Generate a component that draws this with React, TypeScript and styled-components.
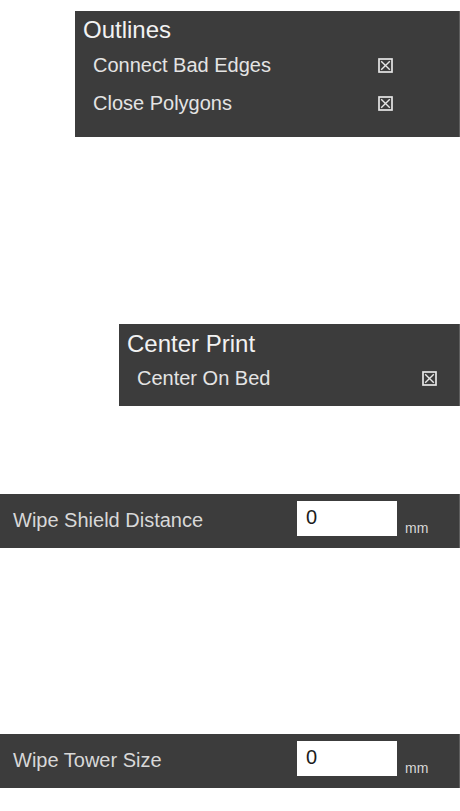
import styled, { createGlobalStyle } from 'styled-components';

const GlobalStyle = createGlobalStyle`
  html, body {
    margin: 0;
    padding: 0;
    background: #ffffff;
  }
  body {
    font-family: 'Liberation Sans', Arial, sans-serif;
    width: 460px;
  }
`;

interface CheckRow {
  label: string;
  checked: boolean;
}

interface GroupProps {
  title: string;
  rows: CheckRow[];
  indent: number;
  spaceBefore: number;
  headerPad: number;
  titleGap: number;
  rowGap: number;
  bottomPad: number;
}

const CheckIcon: React.FC<{ checked: boolean }> = ({ checked }) => (
  <svg width="15" height="15" viewBox="0 0 15 15">
    <rect x="1" y="1" width="13" height="13" fill="none" stroke="#e6e6e6" strokeWidth="1.7" />
    {checked && <path d="M3.2 3.2 L11.8 11.8 M11.8 3.2 L3.2 11.8" stroke="#e6e6e6" strokeWidth="1.4" />}
  </svg>
);

const CheckGroup: React.FC<GroupProps> = ({
  title,
  rows,
  indent,
  spaceBefore,
  headerPad,
  titleGap,
  rowGap,
  bottomPad,
}) => (
  <GroupPanel indent={indent} spaceBefore={spaceBefore} headerPad={headerPad} bottomPad={bottomPad} rowGap={rowGap}>
    <GroupTitle extraGap={titleGap - rowGap}>{title}</GroupTitle>
    {rows.map((row) => (
      <OptionRow key={row.label}>
        <OptionLabel>{row.label}</OptionLabel>
        <CheckIcon checked={row.checked} />
      </OptionRow>
    ))}
  </GroupPanel>
);

const NumberField: React.FC<{ label: string; value: string; spaceBefore: number }> = ({
  label,
  value,
  spaceBefore,
}) => (
  <FieldPanel spaceBefore={spaceBefore}>
    <FieldLabel>{label}</FieldLabel>
    <ValueInput defaultValue={value} />
    <Unit>mm</Unit>
  </FieldPanel>
);

export default function App() {
  return (
    <Page>
      <GlobalStyle />
      <CheckGroup
        title="Outlines"
        indent={75}
        spaceBefore={11}
        headerPad={5}
        titleGap={6}
        rowGap={7}
        bottomPad={18}
        rows={[
          { label: 'Connect Bad Edges', checked: true },
          { label: 'Close Polygons', checked: true },
        ]}
      />
      <CheckGroup
        title="Center Print"
        indent={119}
        spaceBefore={187}
        headerPad={6}
        titleGap={5}
        rowGap={5}
        bottomPad={12}
        rows={[{ label: 'Center On Bed', checked: true }]}
      />
      <NumberField label="Wipe Shield Distance" value="0" spaceBefore={88} />
      <NumberField label="Wipe Tower Size" value="0" spaceBefore={186} />
    </Page>
  );
}

const Page = styled.div`
  display: flex;
  flex-direction: column;
  width: 460px;
  padding-bottom: 24px;
`;

const GroupPanel = styled.section<{
  indent: number;
  spaceBefore: number;
  headerPad: number;
  bottomPad: number;
  rowGap: number;
}>`
  display: flex;
  flex-direction: column;
  gap: ${(p) => p.rowGap}px;
  margin-left: ${(p) => p.indent}px;
  margin-top: ${(p) => p.spaceBefore}px;
  padding: ${(p) => p.headerPad}px 0 ${(p) => p.bottomPad}px 8px;
  background: #3c3c3c;
  border-right: 1px solid #5e5e5e;
`;

const GroupTitle = styled.div<{ extraGap: number }>`
  margin-bottom: ${(p) => p.extraGap}px;
  font-size: 24px;
  line-height: 28px;
  color: #f2f2f2;
`;

const OptionRow = styled.div`
  display: grid;
  grid-template-columns: 285px 15px;
  align-items: center;
  padding-left: 10px;
  height: 31px;
`;

const OptionLabel = styled.span`
  font-size: 20px;
  line-height: 31px;
  color: #e4e4e4;
`;

const FieldPanel = styled.div<{ spaceBefore: number }>`
  display: grid;
  grid-template-columns: 276px 100px auto;
  column-gap: 8px;
  align-items: center;
  margin-top: ${(p) => p.spaceBefore}px;
  height: 54px;
  padding-left: 13px;
  background: #3c3c3c;
  border-right: 1px solid #5e5e5e;
  box-sizing: border-box;
`;

const FieldLabel = styled.span`
  margin-bottom: 2px;
  font-size: 20px;
  color: #d8d8d8;
`;

const ValueInput = styled.input`
  align-self: start;
  box-sizing: border-box;
  width: 100px;
  height: 35px;
  margin-top: 7px;
  border: none;
  outline: none;
  padding: 0 9px 2px;
  font-family: 'Liberation Sans', Arial, sans-serif;
  font-size: 20px;
  color: #1c1c1c;
  background: #ffffff;
`;

const Unit = styled.span`
  align-self: end;
  margin-bottom: 12px;
  font-size: 14px;
  color: #d8d8d8;
`;
